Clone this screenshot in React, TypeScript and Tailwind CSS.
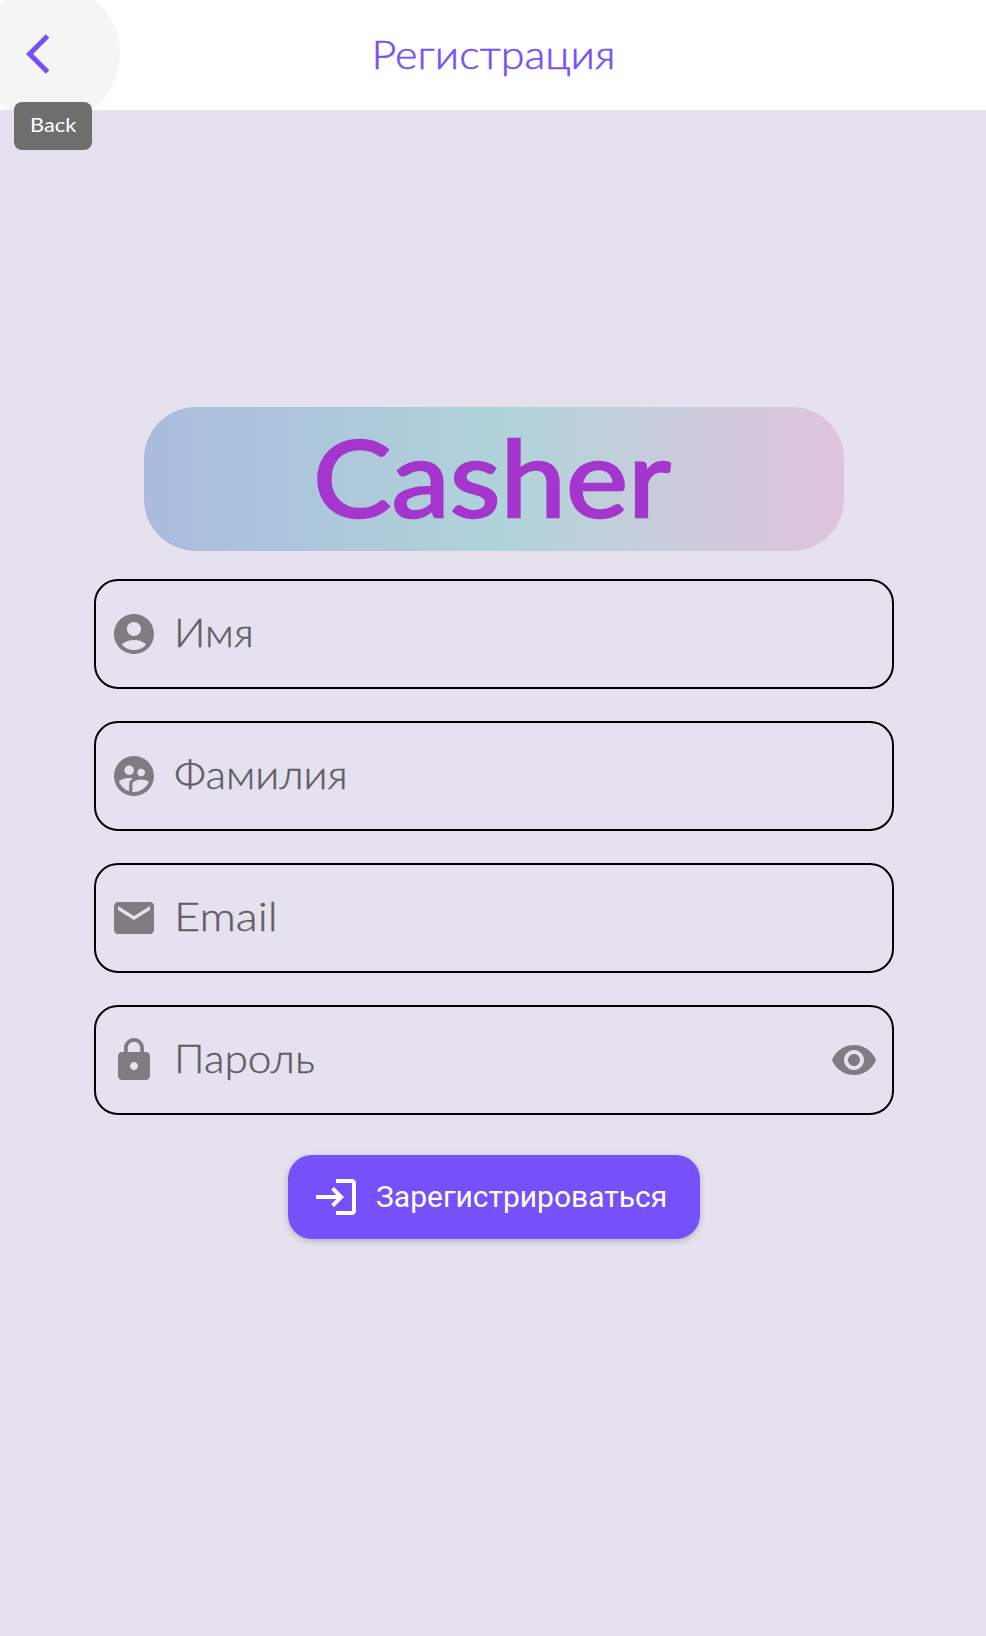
import { useState } from "react";
import type { ComponentType } from "react";
import {
  MdAccountCircle,
  MdArrowBackIos,
  MdEmail,
  MdLock,
  MdLogin,
  MdSupervisedUserCircle,
  MdVisibility,
} from "react-icons/md";

type Field = {
  label: string;
  icon: ComponentType<{ className?: string }>;
  stretch: string;
  secret?: boolean;
};

const fields: Field[] = [
  { label: "Имя", icon: MdAccountCircle, stretch: "scale-x-[1.04]" },
  { label: "Фамилия", icon: MdSupervisedUserCircle, stretch: "scale-x-[1.06]" },
  { label: "Email", icon: MdEmail, stretch: "scale-x-[1.13]" },
  { label: "Пароль", icon: MdLock, stretch: "scale-x-[1.06]", secret: true },
];

function FormField({ field }: { field: Field }) {
  const Icon = field.icon;
  return (
    <div className="flex h-[110px] w-full items-center rounded-3xl border-2 border-black px-3.5 text-[#7f7b83]">
      <Icon className="size-12 shrink-0" />
      <span className="ml-4 grow pb-1 text-[40px] font-light leading-none text-[#5f5c64]">
        <span className={`inline-block origin-left [-webkit-text-stroke:0.35px_currentColor] ${field.stretch}`}>
          {field.label}
        </span>
      </span>
      {field.secret && <MdVisibility className="size-12 shrink-0" />}
    </div>
  );
}

export default function App() {
  const [hovered] = useState(true);
  return (
    <div className="flex h-[1636px] w-[986px] flex-col bg-[#e5e1ef] font-['Lato','Open_Sans',sans-serif]">
      <header className="relative flex h-[110px] shrink-0 items-center justify-center bg-white">
        <div className="absolute inset-0 overflow-hidden">
          <div className="absolute -left-5 -top-4 size-[140px] rounded-full bg-[#f5f5f5]" />
        </div>
        <button className="absolute left-[26px] top-[30px] text-[#7650f8]">
          <MdArrowBackIos className="size-12" />
        </button>
        <h1 className="scale-x-[1.075] pb-[3px] text-[40px] font-light leading-none text-[#7650f8] [-webkit-text-stroke:0.5px_currentColor]">
          Регистрация
        </h1>
        {hovered && (
          <div className="absolute left-3.5 top-[102px] flex h-12 w-[78px] items-center justify-center rounded-lg bg-[#6e6e6e] pb-[5px] text-[20px] text-white">
            <span className="scale-x-[1.09]">Back</span>
          </div>
        )}
      </header>
      <main className="flex flex-col items-center pl-0.5 pt-[297px]">
        <div className="flex h-36 w-[700px] items-center justify-center rounded-[52px] bg-linear-to-r from-[#aabbdd] via-[#b0d4d9] via-52% to-[#e0c3db]">
          <span className="scale-x-[1.097] pb-2 pr-1 text-[107px] leading-none text-[#a436ce] [-webkit-text-stroke:2.5px_currentColor]">
            Casher
          </span>
        </div>
        <form className="mt-7 flex w-[800px] flex-col gap-8">
          {fields.map((field) => (
            <FormField key={field.label} field={field} />
          ))}
        </form>
        <button className="mt-10 flex h-[84px] w-[412px] items-center rounded-3xl bg-[#7650f8] pl-6 font-['Roboto',sans-serif] text-[30px] text-white shadow-[0_2px_6px_rgba(0,0,0,0.22)]">
          <MdLogin className="size-12 shrink-0" />
          <span className="ml-4 whitespace-nowrap pb-0.5">Зарегистрироваться</span>
        </button>
      </main>
    </div>
  );
}
